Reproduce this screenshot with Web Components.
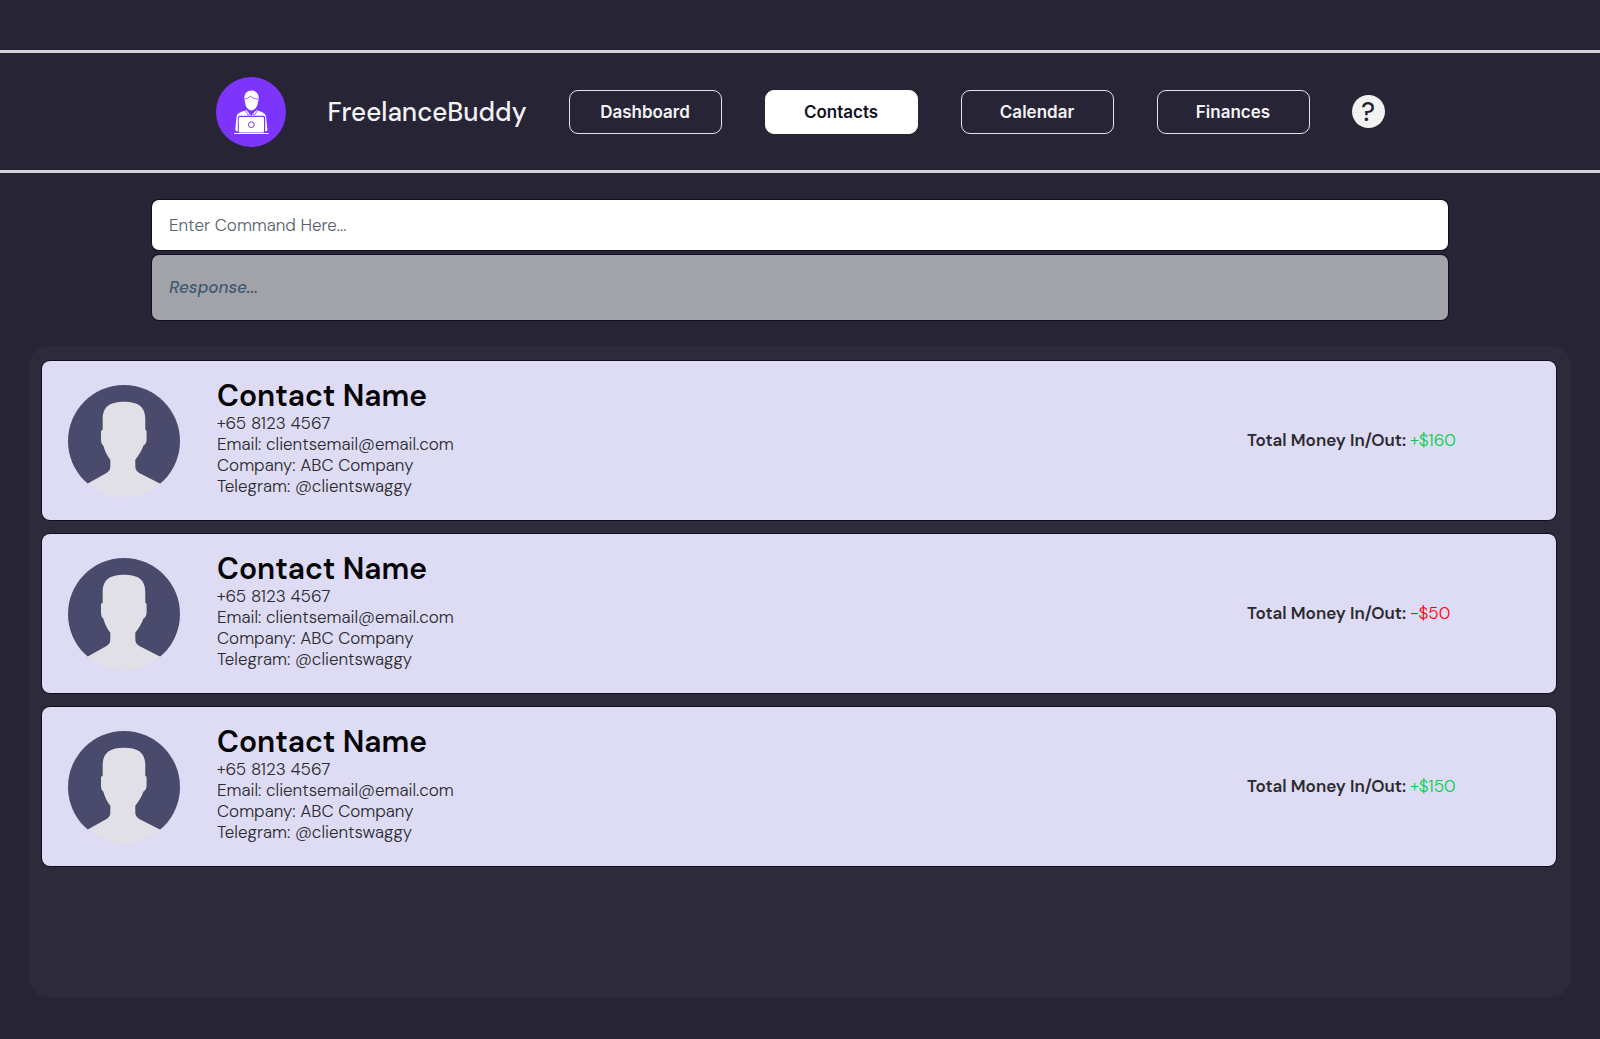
<!DOCTYPE html>
<html lang="en">
<head>
<meta charset="utf-8">
<meta name="viewport" content="width=device-width, initial-scale=1">
<title>FreelanceBuddy</title>
<style>
  body {
    margin: 0;
    min-height: 100vh;
    background: #272436;
    font-family: "DM Sans", Inter, "Open Sans", sans-serif;
    font-size: 17px;
    line-height: 21px;
  }
</style>
</head>
<body>
<buddy-app></buddy-app>

<template id="app-template">
  <style>
    :host { display: block; padding-top: 50px; }
    buddy-command { width: 81%; margin: 27px auto 0; }
    main {
      box-sizing: border-box;
      margin: 26px 29px 42px;
      min-height: 651px;
      padding: 15px 15px 15px 13px;
      border-radius: 20px;
      background: #2d2a3a;
      display: flex;
      flex-direction: column;
      gap: 14px;
    }
  </style>
  <buddy-header></buddy-header>
  <buddy-command></buddy-command>
  <main>
    <contact-card amount="+$160">Contact Name</contact-card>
    <contact-card amount="-$50">Contact Name</contact-card>
    <contact-card amount="+$150">Contact Name</contact-card>
  </main>
</template>

<template id="header-template">
  <style>
    :host {
      display: flex;
      align-items: center;
      justify-content: center;
      gap: 42px;
      height: 117px;
      border: solid #d3d5da;
      border-width: 3px 0;
    }
    svg { display: block; width: 70px; height: 70px; }
    .title { font-size: 26px; line-height: 32px; font-weight: 500; color: #f3f2f4; }
    nav { display: flex; gap: 43px; }
    .help {
      width: 33px; height: 33px; padding: 2px 0 0; border: 0; border-radius: 50%;
      background: #f2f2f2; color: #211e30;
      font: 500 26px/31px "DM Sans", Inter, sans-serif;
    }
  </style>
  <svg viewBox="0 0 70 70" aria-hidden="true">
    <circle cx="35" cy="35" r="35" fill="#7d35fc"/>
    <path fill="#fff" d="M28.500 23C27.700 17.500 30.500 13.600 35.500 13.600C40.500 13.600 43.500 17.500 42.600 23L41.700 26C41.700 30 38.300 33.300 35.500 33.300C32.500 33.300 29.300 30 29.300 26Z"/>
    <path fill="none" stroke="#7d35fc" stroke-width=".8" d="M28.300 22.200C31 21.800 33 20.600 34.300 19C36.500 21.200 39.500 22 42.800 22.200"/>
    <path fill="#fff" d="M30.600 33.200L35.300 38.800L40.200 33.200C45 34.600 49.300 35.600 50 39.500L51.400 52.500C51.400 54 50 54.400 49.200 54.400V41C49.200 39.600 48.400 38.800 47 38.800H24C22.600 38.800 21.800 39.600 21.800 41V54.400C20.400 54.300 19.200 53.700 19.300 52.300L20.600 39.500C21.300 35.600 25.800 34.600 30.600 33.200Z"/>
    <path fill="none" stroke="#7d35fc" stroke-width=".8" d="M29.600 34L32.300 38.300L35.300 35.600L38.400 38.300L41.200 34"/>
    <rect x="22.800" y="39.900" width="25.200" height="15.600" rx="1.200" fill="#fff"/>
    <circle cx="35.300" cy="47.700" r="2.900" fill="none" stroke="#7d35fc" stroke-width="1"/>
    <path stroke="#fff" stroke-width="1" stroke-linecap="round" d="M18.500 56.500H52"/>
  </svg>
  <span class="title">FreelanceBuddy</span>
  <nav aria-label="Main">
    <nav-button>Dashboard</nav-button>
    <nav-button active>Contacts</nav-button>
    <nav-button>Calendar</nav-button>
    <nav-button>Finances</nav-button>
  </nav>
  <button class="help" type="button" title="Help">?</button>
</template>

<template id="nav-template">
  <style>
    :host { display: block; }
    button {
      display: block;
      width: 153px; height: 44px; padding: 0;
      border: 1px solid #e6e5ea; border-radius: 9px;
      background: transparent; color: #f4f3f5;
      font: 600 17px/20px Inter, sans-serif;
    }
    :host([active]) button { background: #fff; border-color: #fff; color: #14121f; }
  </style>
  <button type="button"><slot></slot></button>
</template>

<template id="command-template">
  <style>
    :host { display: flex; flex-direction: column; gap: 5px; }
    input, output {
      box-sizing: border-box;
      display: block; width: 100%; margin: 0; padding: 0 17px;
      border: 0; border-radius: 7px;
      box-shadow: 0 0 0 1px #100d24;
      font-family: inherit; font-size: 17px;
    }
    input { height: 50px; background: #fff; color: #272436; font-weight: 300; }
    input::placeholder { color: #59616e; opacity: 1; }
    output {
      height: 65px; line-height: 65px;
      background: #a2a3a8; color: #3d5a73; font-style: italic; font-weight: 500;
    }
  </style>
  <input type="text" aria-label="Command" placeholder="Enter Command Here...">
  <output>Response...</output>
</template>

<template id="card-template">
  <style>
    :host {
      box-sizing: border-box;
      display: flex;
      align-items: center;
      min-height: 159px;
      padding: 17px 0 17px 26px;
      border-radius: 8px;
      background: #dddcf4;
      box-shadow: 0 0 0 1px #100d24;
      color: #2b2a2e;
    }
    svg { flex: none; display: block; width: 112px; height: 112px; margin-right: 37px; }
    .details { flex: 1; padding-bottom: 6px; font-weight: 300; }
    h2 { margin: 0; font-size: 30px; line-height: 35px; font-weight: 600; color: #060608; }
    p { margin: 0; }
    .total { width: 309px; font-weight: 600; }
    .amount { font-weight: 300; color: #00d047; }
    .amount.out { color: #ff0008; }
  </style>
  <svg viewBox="0 0 112 112" role="img" aria-label="Contact photo">
    <clipPath id="round"><circle cx="56" cy="56" r="56"/></clipPath>
    <g clip-path="url(#round)">
      <path fill="#4a4a6d" d="M0 0H112V98.700H0Z"/>
      <path fill="#e1e0e6" d="M0 112V98.700H19.300L38.500 88C41.500 86 42.300 84.500 42.300 81V74.700C39 70.500 36.600 65.500 35.300 60.500C33.500 59.500 33 57 33 54V47C33 45.500 33.700 45 34.700 45V34C34.700 21 43 16.700 56 16.700C69 16.700 77.300 21 77.300 34V45C78.200 45 78.600 45.500 78.600 47V54C78.600 57 77.700 59.500 75.500 60.500C73.800 65.500 70.500 70.500 67.300 74.700V81C67.300 84.500 68.300 86 71.300 88L92.300 98.700H112V112Z"/>
    </g>
  </svg>
  <div class="details">
    <h2><slot></slot></h2>
    <p>+65 8123 4567</p>
    <p>Email: clientsemail@email.com</p>
    <p>Company: ABC Company</p>
    <p>Telegram: @clientswaggy</p>
  </div>
  <div class="total">Total Money In/Out: <span class="amount"></span></div>
</template>

<script>
  class TemplateElement extends HTMLElement {
    constructor() {
      super();
      const template = document.getElementById(this.constructor.template);
      this.attachShadow({ mode: "open" }).append(template.content.cloneNode(true));
    }
  }
  class NavButton extends TemplateElement { static template = "nav-template"; }
  class BuddyHeader extends TemplateElement { static template = "header-template"; }
  class BuddyCommand extends TemplateElement { static template = "command-template"; }
  class ContactCard extends TemplateElement {
    static template = "card-template";
    connectedCallback() {
      const value = this.getAttribute("amount") || "";
      const amount = this.shadowRoot.querySelector(".amount");
      amount.textContent = value;
      amount.classList.toggle("out", value.startsWith("-"));
    }
  }
  class BuddyApp extends TemplateElement { static template = "app-template"; }
  customElements.define("nav-button", NavButton);
  customElements.define("buddy-header", BuddyHeader);
  customElements.define("buddy-command", BuddyCommand);
  customElements.define("contact-card", ContactCard);
  customElements.define("buddy-app", BuddyApp);
</script>
</body>
</html>
